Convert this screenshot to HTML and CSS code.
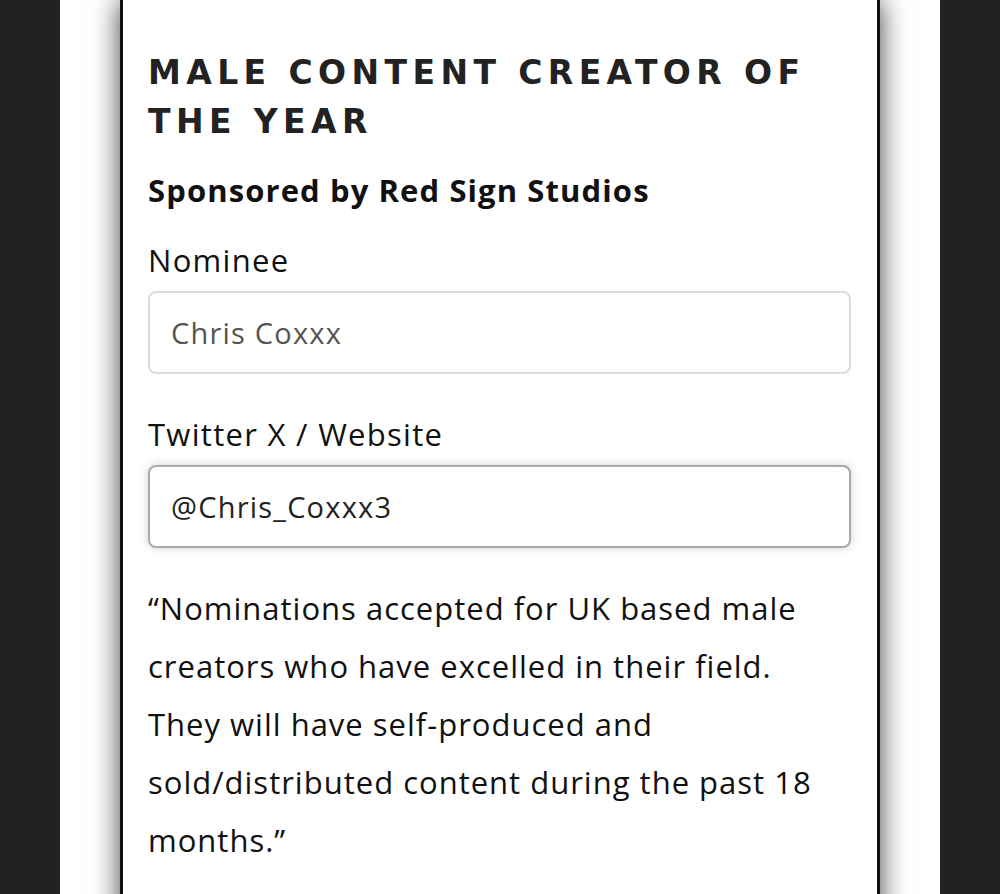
FILE: index.html
```html
<!DOCTYPE html>
<html lang="en">
<head>
   <meta charset="UTF-8">
   <meta name="viewport" content="width=device-width, initial-scale=1.0">
   <title>Male Content Creator of the Year</title>
   <link rel="stylesheet" href="styles.css">
</head>
<body>
   <!-- white page strip between the dark side bars -->
   <div class="page">
       <!-- nomination card -->
       <section class="card">
           <h2 class="award-title">Male Content Creator of the Year</h2>
           <h3 class="sponsor">Sponsored by Red Sign Studios</h3>

           <label class="field-label" for="nominee">Nominee</label>
           <input class="field" id="nominee" type="text" placeholder="Chris Coxxx">

           <label class="field-label label-gap" for="twitter">Twitter X / Website</label>
           <input class="field field-focus" id="twitter" type="text" value="@Chris_Coxxx3">

           <p class="criteria">“Nominations accepted for UK based male creators who have excelled in their field. They will have self-produced and sold/distributed content during the past 18 months.”</p>
       </section>
   </div>
</body>
</html>
```

FILE: styles.css
```css
/* dark backdrop */
body {
    margin: 0;
    background-color: #222;
    font-family: 'Open Sans', 'Liberation Sans', sans-serif;
    color: #111;
    height: 894px;
    overflow: hidden;
}

/* white strip */
.page {
    margin: 0 60px;
    padding: 0 60px;
    background-color: #fff;
    height: 100%;
}

/* card with black side borders and soft shadow */
.card {
    background-color: #fff;
    border: 3px solid #111;
    border-top: none;
    box-shadow: 0 0 26px rgba(0, 0, 0, 0.75);
    padding: 48px 26px 0 25px;
    height: 1000px;
    display: flex;
    flex-direction: column;
}

.award-title {
    margin: 0;
    font-family: 'DejaVu Sans', 'Liberation Sans', sans-serif;
    font-weight: bold;
    font-size: 33px;
    line-height: 49px;
    letter-spacing: 5.4px;
    text-transform: uppercase;
    color: #222;
}

.sponsor {
    margin: 24px 0 0;
    font-size: 31px;
    line-height: 40px;
    letter-spacing: 1.1px;
    font-weight: bold;
    color: #111;
}

.field-label {
    margin-top: 30px;
    font-size: 31px;
    line-height: 40px;
    letter-spacing: 1.3px;
    color: #111;
}

.label-gap {
    margin-top: 40px;
}

/* text inputs */
.field {
    margin-top: 11px;
    height: 83px;
    box-sizing: border-box;
    border: 2px solid #ddd;
    border-radius: 8px;
    padding: 0 21px;
    font-family: 'Open Sans', 'Liberation Sans', sans-serif;
    font-size: 29px;
    letter-spacing: 1.2px;
    color: #222;
    outline: none;
}

.field::placeholder {
    color: #555;
}

.field-focus {
    border-color: #aaa;
    box-shadow: 0 0 10px rgba(0, 0, 0, 0.18);
}

.criteria {
    margin: 31px 0 0;
    padding-right: 20px;
    font-size: 31px;
    line-height: 58px;
    letter-spacing: 1px;
    color: #111;
}
```
